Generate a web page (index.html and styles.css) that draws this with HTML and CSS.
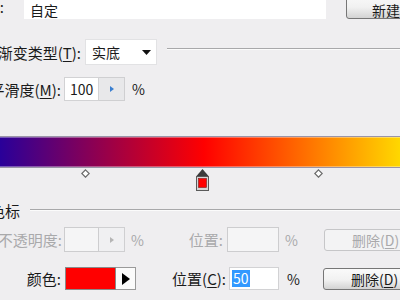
FILE: index.html
```html
<!DOCTYPE html>
<html lang="zh-CN">
<head>
<meta charset="UTF-8" />
<title>渐变编辑器</title>
<link rel="stylesheet" href="styles.css">
</head>
<body>

<div class="row name-row">
  <span class="lbl lbl-name">名称(<u>N</u>):</span>
  <div class="name-input">自定</div>
  <div class="btn btn-new">新建(<u>W</u>)</div>
</div>

<div class="row type-row">
  <span class="lbl lbl-type">渐变类型(<u>T</u>):</span>
  <div class="select">
    <span>实底</span>
    <svg class="caret" width="9" height="5" viewBox="0 0 9 5"><polygon points="0,0 9,0 4.5,5" fill="#111"/></svg>
  </div>
  <div class="rule"></div>
</div>

<div class="row smooth-row">
  <span class="lbl">平滑度(<u>M</u>):</span>
  <div class="num">100</div>
  <div class="spin">
    <svg width="4" height="6" viewBox="0 0 4 6"><polygon points="0,0 4,3 0,6" fill="#3a7fd0"/></svg>
  </div>
  <span class="pct">%</span>
</div>

<div class="gradient-bar"></div>

<div class="stops">
  <svg class="mid mid-a" width="9" height="9" viewBox="0 0 9 9"><polygon points="4.5,0.8 8.2,4.5 4.5,8.2 0.8,4.5" fill="#fff" stroke="#6a6a6a" stroke-width="1.2"/></svg>
  <svg class="color-stop" width="13" height="23" viewBox="0 0 13 23">
    <polygon points="6.5,1 0.5,8 12.5,8" fill="#3c3c3c"/>
    <rect x="0.5" y="8.5" width="12" height="14" fill="#d6d6d6" stroke="#5a5a5a"/>
    <rect x="2.5" y="10.5" width="8" height="9" fill="#ff0000" stroke="#7a1a1a" stroke-width="0.6"/>
  </svg>
  <svg class="mid mid-b" width="9" height="9" viewBox="0 0 9 9"><polygon points="4.5,0.8 8.2,4.5 4.5,8.2 0.8,4.5" fill="#fff" stroke="#6a6a6a" stroke-width="1.2"/></svg>
</div>

<div class="row group-row">
  <span class="group-title">色标</span>
  <div class="rule"></div>
</div>

<div class="row stop-row disabled">
  <span class="lbl">不透明度:</span>
  <div class="num"></div>
  <div class="spin">
    <svg width="4" height="6" viewBox="0 0 4 6"><polygon points="0,0 4,3 0,6" fill="#b5b5b5"/></svg>
  </div>
  <span class="pct">%</span>
  <span class="lbl lbl-pos">位置:</span>
  <div class="pos"></div>
  <span class="pct pct-pos">%</span>
  <div class="btn btn-del">删除(<u>D</u>)</div>
</div>

<div class="row stop-row color-row">
  <span class="lbl">颜色:</span>
  <div class="swatch"></div>
  <div class="pick">
    <svg width="8" height="12" viewBox="0 0 8 12"><polygon points="0,0 8,6 0,12" fill="#000"/></svg>
  </div>
  <span class="lbl lbl-pos">位置(<u>C</u>):</span>
  <div class="pos"><span class="sel">50</span></div>
  <span class="pct pct-pos">%</span>
  <div class="btn btn-del">删除(<u>D</u>)</div>
</div>

</body>
</html>
```

FILE: styles.css
```css
body {
  margin: 0;
  width: 400px;
  height: 300px;
  overflow: hidden;
  background: #efeef0;
  font-family: "Noto Sans CJK SC", "Noto Sans", sans-serif;
  font-size: 14px;
  line-height: 1;
  color: #1a1a1a;
}
u {
  text-underline-offset: 2px;
}
.row {
  display: flex;
  align-items: center;
  box-sizing: border-box;
}
.lbl {
  display: flex;
  justify-content: flex-end;
  flex-shrink: 0;
  width: 61px;
  margin-right: 3px;
  white-space: nowrap;
  font-size: 15px;
}

/* Name */
.name-row {
  height: 26px;
  margin-top: -7px;
}
.lbl-name {
  width: 4px;
  margin-right: 20px;
}
.name-input {
  width: 302px;
  height: 26px;
  flex-shrink: 0;
  box-sizing: border-box;
  background: #fff;
  padding: 8px 0 0 6px;
  display: flex;
  align-items: center;
}
.btn {
  box-sizing: border-box;
  flex-shrink: 0;
  display: flex;
  align-items: center;
  white-space: nowrap;
  border: 1px solid #767676;
  border-radius: 3px;
  background: linear-gradient(#fafafa 0, #f1f1f1 55%, #d3d3d3 100%);
}
.btn-new {
  margin-left: 20px;
  width: 80px;
  height: 26px;
  padding: 8px 0 0 25px;
}

/* Type */
.type-row {
  height: 26px;
  margin-top: 20px;
}
.lbl-type {
  width: 81px;
  margin-right: 4px;
}
.select {
  width: 72px;
  height: 26px;
  flex-shrink: 0;
  box-sizing: border-box;
  background: #fff;
  border: 1px solid #e2e2e4;
  display: flex;
  align-items: center;
  justify-content: space-between;
  padding: 0 5px 0 6px;
}
.rule {
  flex: 1;
  height: 0;
  border-top: 1px solid #a8a8aa;
  border-bottom: 1px solid #fbfbfb;
}
.type-row .rule {
  align-self: flex-start;
  margin: 9px 0 0 10px;
}

/* Smoothness */
.smooth-row {
  height: 24px;
  margin-top: 12px;
}
.num {
  width: 35px;
  height: 24px;
  flex-shrink: 0;
  box-sizing: border-box;
  background: #fff;
  border: 1px solid #d2d2d4;
  padding-left: 5px;
  display: flex;
  align-items: center;
}
.spin {
  width: 26px;
  height: 24px;
  flex-shrink: 0;
  box-sizing: border-box;
  background: #e8e8ea;
  border: 1px solid #cfcfd1;
  border-left: none;
  display: flex;
  align-items: center;
  justify-content: center;
}
.pct {
  width: 12px;
  margin-left: 7px;
  flex-shrink: 0;
}

/* Gradient */
.gradient-bar {
  height: 32px;
  margin: 35px -10px 0;
  box-sizing: border-box;
  border: 1px solid #9a94a8;
  box-shadow: inset 0 0 0 1px rgba(255, 255, 255, 0.35);
  background: linear-gradient(to right, #0a00b0 -21px, #ff0000 213px, #ffff00 445px);
}
.stops {
  position: relative;
  height: 24px;
}
.stops svg {
  position: absolute;
  display: block;
}
.mid {
  top: 1px;
}
.mid-a {
  left: 81px;
}
.mid-b {
  left: 314px;
}
.color-stop {
  left: 196px;
  top: 0;
}

/* Color stops group */
.group-row {
  height: 20px;
  margin-top: 8px;
}
.group-title {
  margin-left: -10px;
  white-space: nowrap;
  font-size: 15px;
}
.group-row .rule {
  margin-left: 10px;
}
.stop-row {
  height: 25px;
  margin-top: 7px;
}
.disabled {
  color: #a9a9ab;
}
.disabled .lbl {
  width: 62px;
  margin-right: 2px;
}
.disabled .num,
.disabled .pos {
  background: #f5f5f6;
  border-color: #cdcdcf;
  height: 25px;
}
.disabled .spin {
  height: 25px;
  background: #f0f0f2;
}
.disabled .pct {
  margin-left: 6px;
}
.lbl-pos {
  width: 80px;
}
.disabled .lbl-pos {
  width: 80px;
  margin-right: 4px;
}
.pos {
  width: 52px;
  height: 23px;
  flex-shrink: 0;
  box-sizing: border-box;
  background: #fff;
  border: 1px solid #d2d2d4;
  padding-left: 2px;
  display: flex;
  align-items: center;
}
.pct-pos {
  margin-left: 5px;
}
.btn-del {
  margin-left: 27px;
  width: 90px;
  height: 22px;
  padding-left: 27px;
}
.disabled .btn-del {
  border-color: #c6c6c8;
  background: #f3f3f4;
  color: #a9a9ab;
}

/* Color row */
.color-row {
  height: 23px;
  margin-top: 15px;
}
.color-row .lbl {
  margin-right: 4px;
}
.swatch {
  width: 51px;
  height: 23px;
  flex-shrink: 0;
  box-sizing: border-box;
  background: #ff0000;
  border: 1px solid #8a8a8a;
}
.pick {
  width: 20px;
  height: 23px;
  flex-shrink: 0;
  box-sizing: border-box;
  background: #fbfbfb;
  border: 1px solid #9a9a9a;
  border-left: none;
  display: flex;
  align-items: center;
  justify-content: center;
}
.color-row .lbl-pos {
  width: 90px;
  margin-right: 3px;
}
.color-row .pos {
  width: 50px;
}
.color-row .pct-pos {
  margin-left: 8px;
}
.color-row .btn-del {
  margin-left: 24px;
}
.sel {
  background: #3399ff;
  color: #fff;
  padding: 1px 1px 2px;
}
```
